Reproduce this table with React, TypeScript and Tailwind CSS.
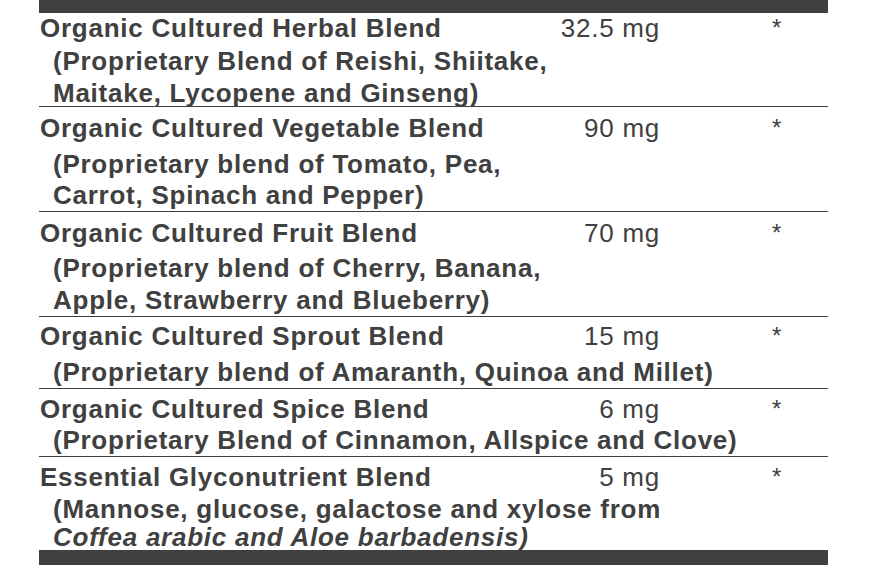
const font = { fontFamily: '"Liberation Sans", Arial, sans-serif' };

type Row = {
  name: string;
  amount: string;
  pt: string;
  titleH: string;
  lines: { text: React.ReactNode; cls: string }[];
};

const rows: Row[] = [
  {
    name: "Organic Cultured Herbal Blend",
    amount: "32.5 mg",
    pt: "pt-0",
    titleH: "h-[30px] leading-[30px]",
    lines: [
      { text: "(Proprietary Blend of Reishi, Shiitake,", cls: "mt-[2px] h-[32px] leading-[32px]" },
      { text: "Maitake, Lycopene and Ginseng)", cls: "h-[29px] leading-[32px]" },
    ],
  },
  {
    name: "Organic Cultured Vegetable Blend",
    amount: "90 mg",
    pt: "pt-[5px]",
    titleH: "h-[32px] leading-[32px]",
    lines: [
      { text: "(Proprietary blend of Tomato, Pea,", cls: "mt-[4px] h-[32px] leading-[32px]" },
      { text: "Carrot, Spinach and Pepper)", cls: "h-[31px] leading-[31px]" },
    ],
  },
  {
    name: "Organic Cultured Fruit Blend",
    amount: "70 mg",
    pt: "pt-[5px]",
    titleH: "h-[32px] leading-[32px]",
    lines: [
      { text: "(Proprietary blend of Cherry, Banana,", cls: "mt-[3px] h-[32px] leading-[32px]" },
      { text: "Apple, Strawberry and Blueberry)", cls: "mt-[1px] h-[31px] leading-[31px]" },
    ],
  },
  {
    name: "Organic Cultured Sprout Blend",
    amount: "15 mg",
    pt: "pt-[3px]",
    titleH: "h-[32px] leading-[32px]",
    lines: [
      { text: "(Proprietary blend of Amaranth, Quinoa and Millet)", cls: "mt-[4px] h-[32px] leading-[32px]" },
    ],
  },
  {
    name: "Organic Cultured Spice Blend",
    amount: "6 mg",
    pt: "pt-[4px]",
    titleH: "h-[32px] leading-[32px]",
    lines: [
      { text: "(Proprietary Blend of Cinnamon, Allspice and Clove)", cls: "h-[31px] leading-[31px]" },
    ],
  },
  {
    name: "Essential Glyconutrient Blend",
    amount: "5 mg",
    pt: "pt-[4px]",
    titleH: "h-[32px] leading-[32px]",
    lines: [
      { text: "(Mannose, glucose, galactose and xylose from", cls: "mt-[2px] h-[28px] leading-[28px]" },
      {
        text: <span className="italic">Coffea arabic and Aloe barbadensis)</span>,
        cls: "h-[22px] leading-[28px] mb-[5px]",
      },
    ],
  },
];

export default function App() {
  return (
    <div className="min-h-[568px] w-[870px] bg-white" style={font}>
      <div className="ml-[39px] w-[789px] text-[26px] tracking-[0.75px] text-[#404040]">
        <div className="h-[13px] bg-[#404040]" />
        {rows.map((r, i) => (
          <div
            key={r.name}
            className={`${r.pt} ${i < rows.length - 1 ? "border-b border-[#404040]" : ""}`}
          >
            <div className={`flex whitespace-nowrap ${r.titleH}`}>
              <div className="flex-1 pl-[1px] font-bold">{r.name}</div>
              <div className="w-[140px] text-right">{r.amount}</div>
              <div className="w-[168px] pl-[112px] text-[24px]">*</div>
            </div>
            {r.lines.map((l, j) => (
              <div key={j} className={`whitespace-nowrap pl-[14px] font-bold ${l.cls}`}>
                {l.text}
              </div>
            ))}
          </div>
        ))}
        <div className="h-[15px] bg-[#404040]" />
      </div>
    </div>
  );
}
